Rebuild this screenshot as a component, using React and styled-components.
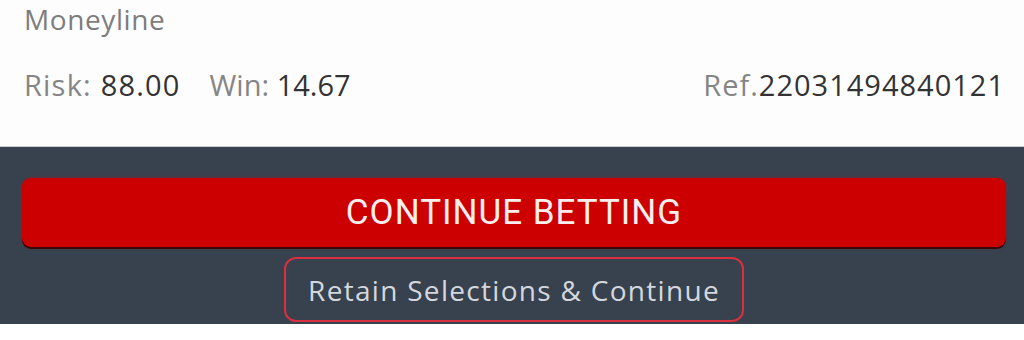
import React from 'react'
import styled, { createGlobalStyle } from 'styled-components'

const GlobalStyle = createGlobalStyle`
  html, body {
    margin: 0;
    padding: 0;
    background: #ffffff;
    font-family: "Open Sans", "Liberation Sans", sans-serif;
  }
`

const Page = styled.div`
  width: 1024px;
  height: 340px;
  display: flex;
  flex-direction: column;
  overflow: hidden;
`

const Details = styled.section`
  height: 147px;
  background: #fdfdfd;
  padding: 0 19px 0 24px;
  box-sizing: border-box;
  border-bottom: 1px solid #c9ccd1;
`

const Market = styled.div`
  color: #7d7d7d;
  font-size: 28px;
  line-height: 38px;
  letter-spacing: 0.6px;
`

const StakeRow = styled.div`
  display: flex;
  align-items: baseline;
  margin-top: 28px;
  font-size: 29px;
  line-height: 38px;
`

const Label = styled.span`
  color: #858585;
`

const Value = styled.span`
  color: #333333;
  margin-right: ${p => p.gap || 0}px;
`

const StakeGroup = styled.span`
  letter-spacing: ${p => p.spacing}px;
`

const RefNo = styled.span`
  margin-left: auto;
  letter-spacing: 1px;
`

const Actions = styled.section`
  height: 177px;
  background: #38424f;
  display: flex;
  flex-direction: column;
  align-items: center;
  padding: 31px 18px 0 22px;
  box-sizing: border-box;
`

const ContinueButton = styled.button`
  width: 100%;
  height: 69px;
  border: none;
  border-radius: 9px;
  background: #cc0000;
  box-shadow: 0 2px 0 #3a0707, 0 0 3px rgba(200, 0, 0, 0.6);
  color: #fbeeee;
  font-family: Roboto, "Liberation Sans", sans-serif;
  font-size: 35px;
  letter-spacing: 1px;
  cursor: pointer;
`

const RetainButton = styled.button`
  margin-top: 10px;
  height: 65px;
  padding: 0 22px;
  border: 2px solid #d8303f;
  border-radius: 12px;
  background: transparent;
  color: #d4d8de;
  font-family: "Open Sans", "Liberation Sans", sans-serif;
  font-size: 28px;
  letter-spacing: 1.3px;
  cursor: pointer;
`

export default function App() {
  return (
    <>
      <GlobalStyle />
      <Page>
        <Details>
          <Market>Moneyline</Market>
          <StakeRow>
            <StakeGroup spacing={1.2}>
              <Label>Risk:&nbsp;</Label>
              <Value gap={29}>88.00</Value>
            </StakeGroup>
            <StakeGroup spacing={0}>
              <Label>Win:&nbsp;</Label>
              <Value>14.67</Value>
            </StakeGroup>
            <RefNo>
              <Label>Ref.</Label>
              <Value>22031494840121</Value>
            </RefNo>
          </StakeRow>
        </Details>
        <Actions>
          <ContinueButton>CONTINUE BETTING</ContinueButton>
          <RetainButton>Retain Selections &amp; Continue</RetainButton>
        </Actions>
      </Page>
    </>
  )
}
